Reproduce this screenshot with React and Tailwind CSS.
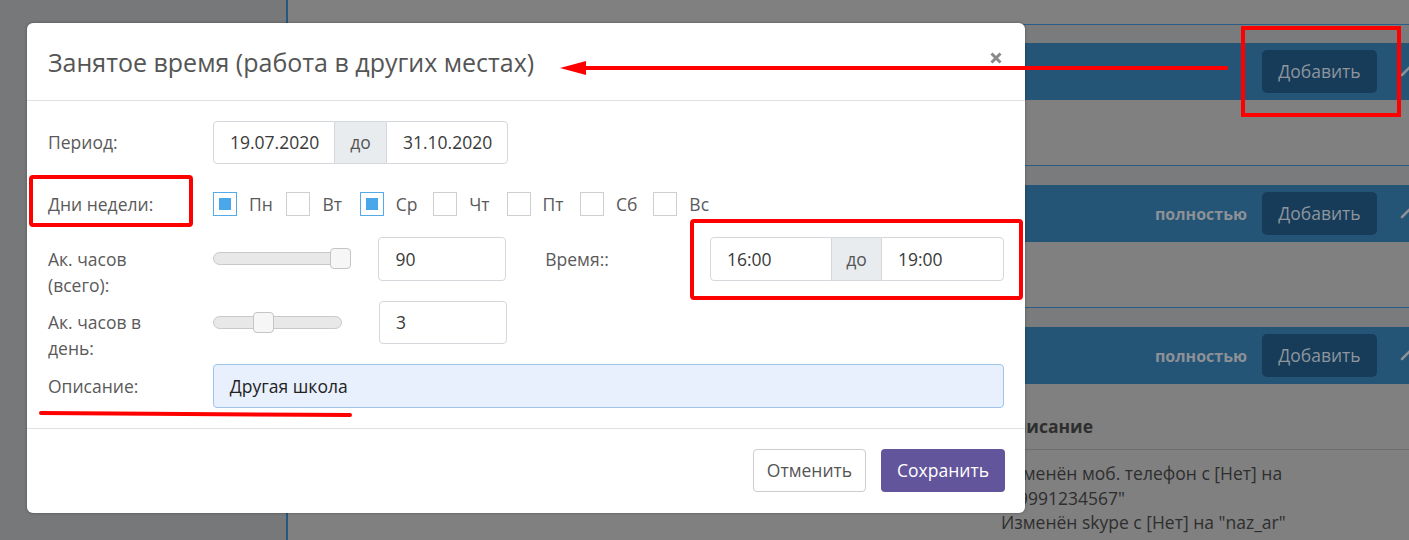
import React from "react";

function Chevron() {
  return (
    <svg width="20" height="20" viewBox="0 0 20 20" className="ml-[23px] shrink-0">
      <path d="M2 13 L10 5 L18 13" fill="none" stroke="#8c9096" strokeWidth="2.5" strokeLinecap="round" />
    </svg>
  );
}

function Bar({ full }) {
  return (
    <div className="h-[57px] bg-[#245576] flex items-center justify-end">
      {full && (
        <span className="text-[16px] font-bold text-[#8d9196] mr-[15px]">полностью</span>
      )}
      <div className="w-[115px] h-[43px] rounded-[5px] bg-[#163c5a] flex items-center justify-center text-[17.5px] text-[#8e959d]">
        Добавить
      </div>
      <div className="w-[51px] flex items-center">
        <Chevron />
      </div>
    </div>
  );
}

function Check({ label, checked }) {
  return (
    <div className="w-[73.4px] flex items-center shrink-0">
      <div
        className={
          checked
            ? "w-[24px] h-[24px] border border-[#55aae6] flex items-center justify-center bg-white"
            : "w-[24px] h-[24px] border border-[#cfcfcf] bg-white"
        }
      >
        {checked && <div className="w-[12px] h-[12px] bg-[#4aa8ea]" />}
      </div>
      <span className="ml-[12px] text-[#5a5a5a]">{label}</span>
    </div>
  );
}

function Slider({ width, thumb, mt }) {
  return (
    <div className={"relative h-[21px] " + mt} style={{ width }}>
      <div className="absolute left-0 right-0 top-[4px] h-[13px] rounded-full bg-[#e8e8e8] border border-[#c9c9c9]" />
      <div
        className="absolute top-0 w-[21px] h-[21px] rounded-[4px] bg-[#f6f6f6] border border-[#c5c5c5]"
        style={{ left: thumb }}
      />
    </div>
  );
}

export default function App() {
  return (
    <div className="relative w-[1409px] h-[540px] overflow-hidden bg-[#808080] font-['Open_Sans',sans-serif]">
      {/* background page */}
      <div className="flex h-full">
        <div className="w-[288px] shrink-0 h-full bg-[#77787a] border-r-2 border-[#25577f]" />
        <div className="w-[1140px] shrink-0 flex flex-col">
          <div className="h-[24px]" />
          <div className="border-t border-[#2a5c86]" />
          <div className="h-[18px] bg-[#7a7b7d]" />
          <Bar />
          <div className="h-[65px]" />
          <div className="border-t border-[#2a5c86]" />
          <div className="h-[19px] bg-[#7a7b7d]" />
          <Bar full />
          <div className="h-[65px]" />
          <div className="border-t border-[#2a5c86]" />
          <div className="h-[19px] bg-[#7a7b7d]" />
          <Bar full />
          <div className="pl-[713px] text-[17.5px] text-[#2e2e2e]">
            <div className="mt-[29px] pb-[10px] leading-[26px] font-bold border-b border-[#6d6d6d]">
              Описание
            </div>
            <div className="pt-[11px] leading-[24.5px] w-[300px]">
              <div>Изменён моб. телефон с [Нет] на</div>
              <div>"79991234567"</div>
              <div>Изменён skype с [Нет] на "naz_ar"</div>
            </div>
          </div>
        </div>
      </div>

      {/* modal */}
      <div className="absolute left-[27px] top-[23px] w-[998px] h-[490px] bg-white rounded-[6px] shadow-[0_0_3px_rgba(0,0,0,0.35)] flex flex-col text-[17.5px]">
        <div className="h-[78px] shrink-0 border-b border-[#dee2e6] px-[21px] flex items-start justify-between">
          <div className="pt-[21px] text-[25px] leading-[36px] text-[#555]">
            Занятое время (работа в других местах)
          </div>
          <svg width="12" height="12" viewBox="0 0 12 12" className="mt-[29px] mr-[2px]">
            <path d="M1.5 1.5 L10.5 10.5 M10.5 1.5 L1.5 10.5" stroke="#8a8a8a" strokeWidth="3" />
          </svg>
        </div>

        <div className="px-[21px] pt-[20px] pb-[20px] flex flex-col">
          {/* period */}
          <div className="h-[43px] flex items-center">
            <div className="w-[165px] text-[#5a5a5a]">Период:</div>
            <div className="flex h-[43px] text-[#3a3a3a]">
              <div className="w-[122px] border border-[#d4d8dc] rounded-l-[4px] flex items-center pl-[16px]">19.07.2020</div>
              <div className="w-[51px] bg-[#e9ecef] border-y border-[#d4d8dc] flex items-center justify-center text-[#555]">до</div>
              <div className="w-[122px] border border-[#d4d8dc] rounded-r-[4px] flex items-center pl-[16px]">31.10.2020</div>
            </div>
          </div>

          {/* days */}
          <div className="mt-[20px] h-[40px] flex items-center">
            <div className="w-[165px] text-[#5a5a5a]">Дни недели:</div>
            <div className="flex">
              <Check label="Пн" checked />
              <Check label="Вт" />
              <Check label="Ср" checked />
              <Check label="Чт" />
              <Check label="Пт" />
              <Check label="Сб" />
              <Check label="Вс" />
            </div>
          </div>

          {/* total hours */}
          <div className="mt-[13px] flex items-start">
            <div className="w-[165px] pt-[9px] leading-[26px] text-[#5a5a5a]">
              Ак. часов
              <br />
              (всего):
            </div>
            <div className="w-[166px]">
              <Slider width="137px" thumb="117px" mt="mt-[11px]" />
            </div>
            <div className="w-[128px] h-[44px] border border-[#d4d8dc] rounded-[4px] flex items-center pl-[16px] text-[#3a3a3a]">90</div>
            <div className="ml-[39px] w-[165px] h-[44px] flex items-center text-[#5a5a5a]">Время::</div>
            <div className="flex h-[44px] text-[#3a3a3a]">
              <div className="w-[122px] border border-[#d4d8dc] rounded-l-[4px] flex items-center pl-[16px]">16:00</div>
              <div className="w-[49px] bg-[#e9ecef] border-y border-[#d4d8dc] flex items-center justify-center text-[#555]">до</div>
              <div className="w-[123px] border border-[#d4d8dc] rounded-r-[4px] flex items-center pl-[16px]">19:00</div>
            </div>
          </div>

          {/* per day */}
          <div className="mt-[3px] flex items-start">
            <div className="w-[165px] pt-[8px] leading-[26px] text-[#5a5a5a]">
              Ак. часов в
              <br />
              день:
            </div>
            <div className="w-[166px]">
              <Slider width="129px" thumb="40px" mt="mt-[11px]" />
            </div>
            <div className="w-[128px] h-[43px] border border-[#d4d8dc] rounded-[4px] flex items-center pl-[16px] text-[#3a3a3a]">3</div>
          </div>

          {/* description */}
          <div className="mt-[3px] h-[44px] flex items-center">
            <div className="w-[165px] text-[#5a5a5a]">Описание:</div>
            <div className="w-[792px] h-[44px] bg-[#e8f0fe] border border-[#9fc3ec] rounded-[4px] flex items-center pl-[16px] text-[#222]">
              Другая школа
            </div>
          </div>
        </div>

        <div className="border-t border-[#dee2e6] py-[20px] pr-[20px] flex justify-end gap-[15px]">
          <div className="w-[113px] h-[43px] border border-[#cccccc] rounded-[4px] flex items-center justify-center text-[#555]">Отменить</div>
          <div className="w-[124px] h-[43px] bg-[#63559b] rounded-[4px] flex items-center justify-center text-white">Сохранить</div>
        </div>
      </div>

      {/* red annotations */}
      <svg className="absolute inset-0 pointer-events-none" width="1409" height="540">
        <line x1="582" y1="68" x2="1226" y2="68" stroke="#ff0000" strokeWidth="4" strokeLinecap="round" />
        <polygon points="560,68 586,61 586,75" fill="#ff0000" />
        <rect x="1243" y="28" width="156" height="87" fill="none" stroke="#ff0000" strokeWidth="4" />
        <rect x="31" y="177" width="160" height="48" rx="2" fill="none" stroke="#ff0000" strokeWidth="4" />
        <rect x="692" y="221" width="329" height="77" rx="2" fill="none" stroke="#ff0000" strokeWidth="4" />
        <line x1="41" y1="413" x2="350" y2="415" stroke="#ff0000" strokeWidth="4" strokeLinecap="round" />
      </svg>
    </div>
  );
}
